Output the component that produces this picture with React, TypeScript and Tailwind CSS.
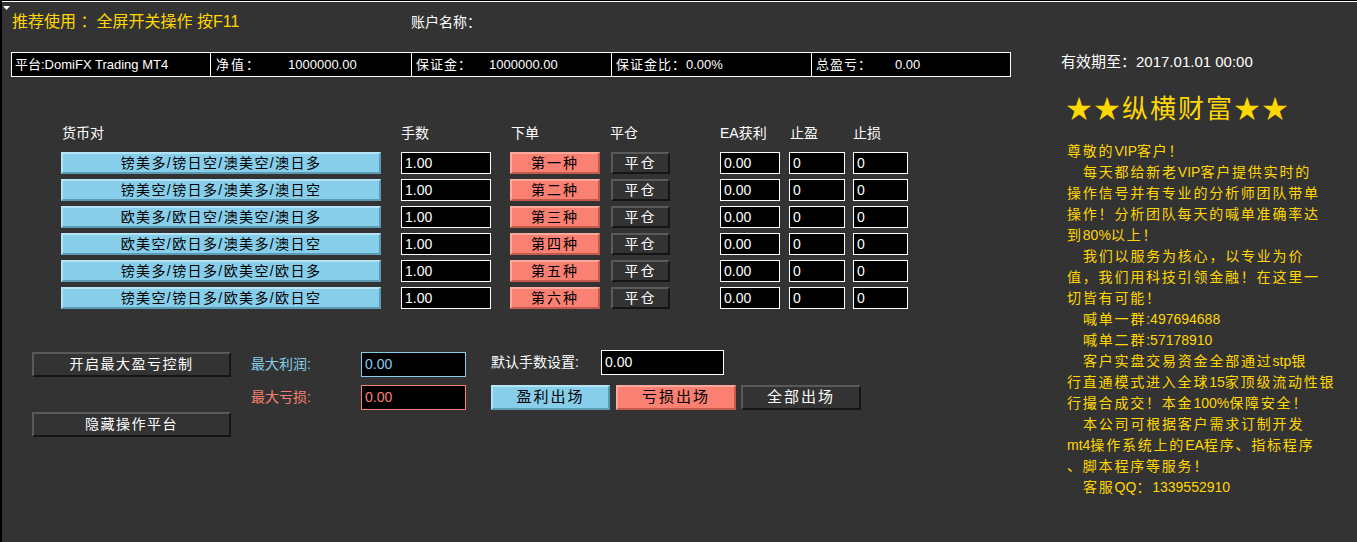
import React from 'react';

const font = "font-['Liberation_Sans','Noto_Sans_CJK_SC',sans-serif]";

const rows = [
  { pair: '镑美多/镑日空/澳美空/澳日多', order: '第一种' },
  { pair: '镑美空/镑日多/澳美多/澳日空', order: '第二种' },
  { pair: '欧美多/欧日空/澳美空/澳日多', order: '第三种' },
  { pair: '欧美空/欧日多/澳美多/澳日空', order: '第四种' },
  { pair: '镑美多/镑日多/欧美空/欧日多', order: '第五种' },
  { pair: '镑美空/镑日多/欧美多/欧日空', order: '第六种' },
];

const notice = [
  { text: '尊敬的VIP客户！', indent: false },
  { text: '每天都给新老VIP客户提供实时的', indent: true },
  { text: '操作信号并有专业的分析师团队带单', indent: false },
  { text: '操作！分析团队每天的喊单准确率达', indent: false },
  { text: '到80%以上！', indent: false },
  { text: '我们以服务为核心，以专业为价', indent: true },
  { text: '值，我们用科技引领金融！在这里一', indent: false },
  { text: '切皆有可能！', indent: false },
  { text: '喊单一群:497694688', indent: true },
  { text: '喊单二群:57178910', indent: true },
  { text: '客户实盘交易资金全部通过stp银', indent: true },
  { text: '行直通模式进入全球15家顶级流动性银', indent: false },
  { text: '行撮合成交！本金100%保障安全！', indent: false },
  { text: '本公司可根据客户需求订制开发', indent: true },
  { text: 'mt4操作系统上的EA程序、指标程序', indent: false },
  { text: '、脚本程序等服务！', indent: false },
  { text: '客服QQ：1339552910', indent: true },
];

// bevelled MT4 style buttons
const btnBlue =
  'bg-[#87ceeb] border-2 border-t-[#b4e4f6] border-l-[#b4e4f6] border-b-[#5b9bb3] border-r-[#5b9bb3] text-black';
const btnRed =
  'bg-[#fa8072] border-2 border-t-[#ffa89c] border-l-[#ffa89c] border-b-[#c45a4e] border-r-[#c45a4e] text-black';
const btnDark =
  'bg-[#333333] border-2 border-t-[#5a5a5a] border-l-[#5a5a5a] border-b-[#151515] border-r-[#151515] text-white';

const Field: React.FC<{ value: string; className?: string }> = ({ value, className = '' }) => (
  <div className={`h-[22px] bg-black border border-white text-white text-[14px] flex items-center pl-[3px] ${className}`}>
    {value}
  </div>
);

// CJK glyphs are spaced wider than latin runs
const Spaced: React.FC<{ text: string }> = ({ text }) => (
  <>
    {text.split(/([\x20-\x7e]+)/).filter(Boolean).map((part, i) =>
      /^[\x20-\x7e]+$/.test(part) ? (
        <span key={i} className="tracking-normal">{part}</span>
      ) : (
        <span key={i} className="tracking-[1.8px]">{part}</span>
      )
    )}
  </>
);

const App: React.FC = () => {
  return (
    <div className={`w-[1357px] h-[542px] bg-black pt-px pl-[2px] overflow-hidden ${font}`}>
      <div className="h-full border-t border-white bg-[#333333] flex">
        {/* Left: operation panel */}
        <div className="w-[1059px] shrink-0 relative">
          <svg className="absolute left-[1px] top-[4px]" width="7" height="5" viewBox="0 0 7 5">
            <path d="M0 0 L7 0 L3.5 4 Z" fill="#fff" />
          </svg>

          <div className="h-[40px] flex items-center pl-[10px]">
            <span className="w-[399px] text-[16px] text-[#ffd700] whitespace-pre">推荐使用 ：全屏开关操作 按F11</span>
            <span className="text-[14px] text-white">账户名称：</span>
          </div>

          {/* account info bar */}
          <div className="ml-[9px] mt-[10px] w-[1000px] h-[25px] bg-black border border-white flex text-[13px] text-white">
            <div className="w-[199px] border-r border-white flex items-center pl-[3px]">平台:DomiFX Trading MT4</div>
            <div className="w-[201px] border-r border-white flex items-center pl-[5px]">
              <span className="w-[72px] tracking-[2px]">净值：</span>
              <span>1000000.00</span>
            </div>
            <div className="w-[200px] border-r border-white flex items-center pl-[4px]">
              <span className="w-[73px] tracking-[1px]">保证金：</span>
              <span>1000000.00</span>
            </div>
            <div className="w-[200px] border-r border-white flex items-center pl-[4px]">
              <span className="tracking-[1px]">保证金比：</span>0.00%
            </div>
            <div className="flex-1 flex items-center pl-[4px]">
              <span className="w-[79px] tracking-[1px]">总盈亏：</span>
              <span>0.00</span>
            </div>
          </div>

          {/* table headers */}
          <div className="mt-[46px] h-[20px] flex items-center text-[14px] text-white">
            <span className="ml-[60px] w-[339px]">货币对</span>
            <span className="w-[110px]">手数</span>
            <span className="w-[99px]">下单</span>
            <span className="w-[110px]">平仓</span>
            <span className="w-[70px]">EA获利</span>
            <span className="w-[63px]">止盈</span>
            <span>止损</span>
          </div>

          {/* order rows */}
          <div className="mt-[9px] flex flex-col gap-[5px]">
            {rows.map((r) => (
              <div key={r.order} className="flex h-[22px]">
                <div className={`ml-[59px] w-[320px] h-[22px] flex items-center justify-center text-[14px] tracking-[1.4px] ${btnBlue}`}>
                  {r.pair}
                </div>
                <Field value="1.00" className="ml-[20px] w-[90px]" />
                <div className={`ml-[19px] w-[90px] h-[22px] flex items-center justify-center text-[14px] tracking-[2px] ${btnRed}`}>
                  {r.order}
                </div>
                <div className={`ml-[11px] w-[59px] h-[22px] flex items-center justify-center text-[14px] tracking-[2px] ${btnDark}`}>
                  平仓
                </div>
                <Field value="0.00" className="ml-[50px] w-[60px]" />
                <Field value="0" className="ml-[9px] w-[56px]" />
                <Field value="0" className="ml-[8px] w-[55px]" />
              </div>
            ))}
          </div>

          {/* bottom controls */}
          <div className="mt-[41px] flex items-start text-[14px]">
            <div className="ml-[30px] w-[199px] flex flex-col">
              <div className={`mt-[2px] h-[25px] flex items-center justify-center tracking-[1.5px] ${btnDark}`}>开启最大盈亏控制</div>
              <div className={`mt-[35px] h-[25px] flex items-center justify-center tracking-[1.5px] ${btnDark}`}>隐藏操作平台</div>
            </div>

            <div className="ml-[20px] flex flex-col">
              <div className="mt-[2px] h-[25px] flex items-center">
                <span className="w-[110px] text-[#87ceeb]">最大利润:</span>
                <div className="w-[105px] h-[25px] bg-black border border-[#87ceeb] text-[#87ceeb] flex items-center pl-[3px]">0.00</div>
              </div>
              <div className="mt-[8px] h-[25px] flex items-center">
                <span className="w-[110px] text-[#fa8072]">最大亏损:</span>
                <div className="w-[105px] h-[25px] bg-black border border-[#fa8072] text-[#fa8072] flex items-center pl-[3px]">0.00</div>
              </div>
            </div>

            <div className="ml-[25px] flex flex-col">
              <div className="h-[25px] flex items-center">
                <span className="w-[110px] text-white">默认手数设置:</span>
                <div className="w-[123px] h-[25px] bg-black border border-white text-white flex items-center pl-[3px]">0.00</div>
              </div>
              <div className="mt-[10px] flex">
                <div className={`w-[119px] h-[25px] flex items-center justify-center text-[15px] tracking-[2px] ${btnBlue}`}>盈利出场</div>
                <div className={`ml-[6px] w-[120px] h-[25px] flex items-center justify-center text-[15px] tracking-[2px] ${btnRed}`}>亏损出场</div>
                <div className={`ml-[5px] w-[120px] h-[25px] flex items-center justify-center text-[15px] tracking-[2px] ${btnDark}`}>全部出场</div>
              </div>
            </div>
          </div>
        </div>

        {/* Right: info panel */}
        <div className="flex-1">
          <div className="mt-[50px] h-[20px] flex items-center text-[15px] text-white whitespace-pre">有效期至：2017.01.01 00:00</div>
          <div className="mt-[20px] ml-[5px] h-[34px] flex items-center text-[26px] text-[#ffd700] tracking-[2px]">★★纵横财富★★</div>
          <div className="mt-[15px] ml-[6px] text-[14px] leading-[21px] text-[#ffd700]">
            {notice.map((l, i) => (
              <div key={i} className={`whitespace-pre ${l.indent ? 'pl-[16px]' : ''}`}>
                <Spaced text={l.text} />
              </div>
            ))}
          </div>
        </div>
      </div>
    </div>
  );
};

export default App;
